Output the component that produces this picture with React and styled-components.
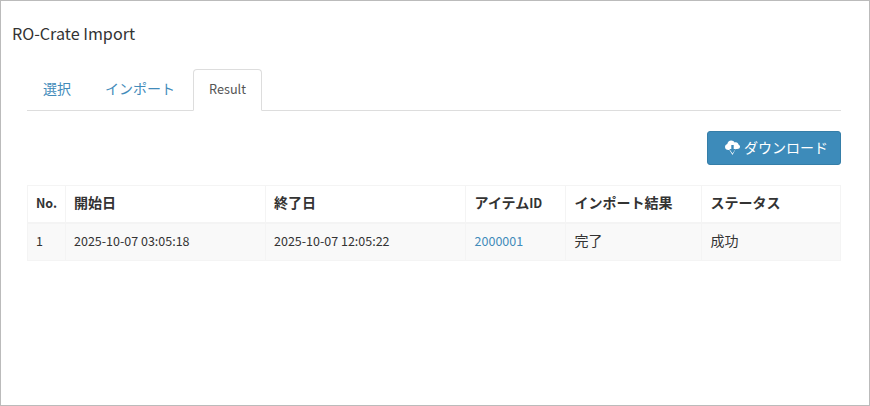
import React from "react";
import styled, { createGlobalStyle } from "styled-components";

const Global = createGlobalStyle`
  html, body { margin: 0; padding: 0; background: #fff; }
  body { font-family: "Noto Sans CJK JP", "Noto Sans", sans-serif; color: #333; font-size: 12px; }
`;
const Page = styled.div`
  box-sizing: border-box; width: 870px; height: 406px; border: 1px solid #bbb; padding: 20px 28px 0 11px;
`;
const Title = styled.h1`
  margin: 0; font-size: 16.15px; font-weight: 400; line-height: 24px; color: #333;
`;
const Content = styled.div`
  margin: 24px 0 0 15px;
`;
const Tabs = styled.ul`
  display: flex; list-style: none; margin: 0; padding: 0; height: 41px; border-bottom: 1px solid #ddd; box-sizing: content-box;
`;
const Tab = styled.li`
  box-sizing: border-box; height: ${p => (p.$active ? "42px" : "41px")}; margin-right: 2px; padding: 0 15px;
  border: 1px solid ${p => (p.$active ? "#ddd" : "transparent")};
  border-bottom-color: ${p => (p.$active ? "#fff" : "transparent")};
  border-radius: 4px 4px 0 0; background: #fff;
  color: ${p => (p.$active ? "#555" : "#428bba")};
  font-size: ${p => (p.$active ? "12.7px" : "14px")}; line-height: ${p => (p.$active ? "38px" : "36px")};
`;
const Actions = styled.div`
  display: flex; justify-content: flex-end; margin-top: 20px;
`;
const Button = styled.button`
  display: flex; align-items: center; justify-content: center; gap: 4px; width: 134px; height: 34px; padding: 0 0 2px 5px;
  border: 1px solid #357ea8; border-radius: 3px; background: #3d8bba; color: #fff;
  font-family: inherit; font-size: 14px; line-height: 20px;
`;
const Table = styled.table`
  width: 813px; margin-top: 20px; border-collapse: collapse; table-layout: fixed;
`;
const Th = styled.th`
  box-sizing: border-box; height: 37px; padding: 0 8px 3px ${p => (p.$inset ? "8.6px" : "8px")};
  border: 1px solid #f4f4f4; border-bottom-width: 2px;
  width: ${p => p.$w}px; text-align: left; font-size: ${p => (p.$small ? "12.5px" : "14px")}; font-weight: 700; color: #333;
`;
const Latin = styled.span`
  font-size: 12.5px;
`;
const Td = styled.td`
  box-sizing: border-box; height: 38px; padding: 0 8px 3px ${p => (p.$inset ? "8.6px" : "8px")};
  border: 1px solid #f4f4f4;
  background: #f9f9f9; font-size: ${p => (p.$big ? "14px" : "12.5px")}; color: #333;
`;
const IdLink = styled.a`
  color: #428bba; text-decoration: none;
`;

const CloudIcon = () => (
  <svg width="15" height="15" viewBox="0 0 15 15" aria-hidden="true">
    <path fill="#fff" d="M3.4 10C1.5 10 0 8.7 0 7c0-1.4 1-2.5 2.3-2.9C2.5 2 4.2.5 6.2.5c1.5 0 2.8.8 3.5 2 .4-.2.8-.3 1.2-.3 1.4 0 2.5 1 2.6 2.3.9.4 1.5 1.3 1.5 2.3 0 1.5-1.3 2.2-2.9 2.2H10.6L7.5 15 4.4 10z" />
    <path fill="#3d8bba" d="M6.3 5h2.4v4h2L7.5 13.4 4.3 9h2z" />
  </svg>
);

export default function App() {
  return (
    <>
      <Global />
      <Page>
        <Title>RO-Crate Import</Title>
        <Content>
          <Tabs>
            <Tab>選択</Tab>
            <Tab>インポート</Tab>
            <Tab $active>Result</Tab>
          </Tabs>
          <Actions>
            <Button><CloudIcon />ダウンロード</Button>
          </Actions>
          <Table>
            <thead>
              <tr>
                <Th $w={38} $small>No.</Th>
                <Th $w={200}>開始日</Th>
                <Th $w={200}>終了日</Th>
                <Th $w={100} $inset>アイテム<Latin>ID</Latin></Th>
                <Th $w={136} $inset>インポート結果</Th>
                <Th $w={139} $inset>ステータス</Th>
              </tr>
            </thead>
            <tbody>
              <tr>
                <Td>1</Td>
                <Td>2025-10-07 03:05:18</Td>
                <Td>2025-10-07 12:05:22</Td>
                <Td $inset><IdLink href="#">2000001</IdLink></Td>
                <Td $big $inset>完了</Td>
                <Td $big $inset>成功</Td>
              </tr>
            </tbody>
          </Table>
        </Content>
      </Page>
    </>
  );
}
